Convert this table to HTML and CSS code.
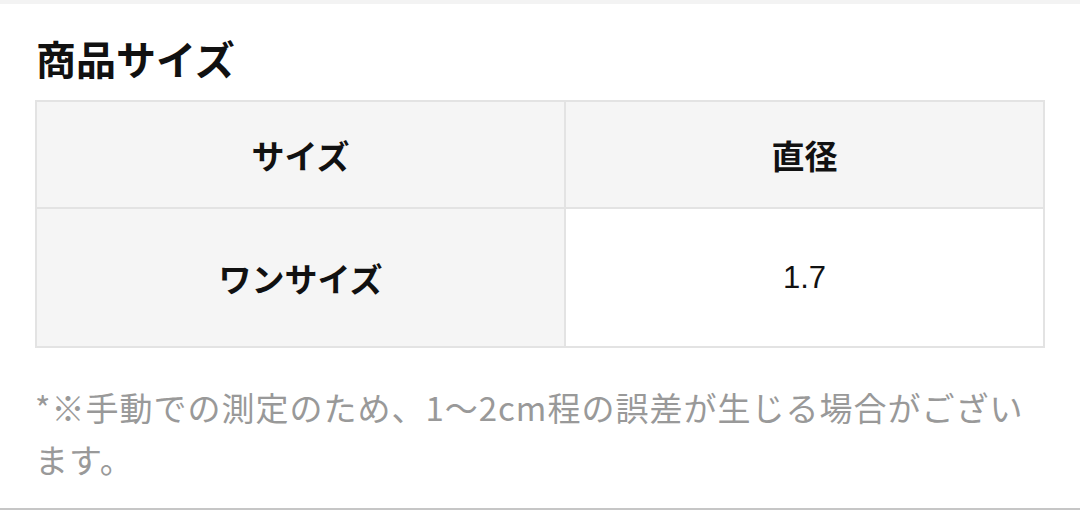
FILE: index.html
```html
<!DOCTYPE html>
<html lang="ja">
<head>
<meta charset="utf-8">
<link rel="stylesheet" href="styles.css">
</head>
<body>
<div class="top-band"></div>
<section class="size-section">
  <h2 class="title">商品サイズ</h2>
  <table class="size-table">
    <thead>
      <tr>
        <th class="col-size">サイズ</th>
        <th class="col-dia">直径</th>
      </tr>
    </thead>
    <tbody>
      <tr>
        <th class="row-head">ワンサイズ</th>
        <td class="value">1.7</td>
      </tr>
    </tbody>
  </table>
  <p class="note">*※手動での測定のため、1〜2cm程の誤差が生じる場合がございます。</p>
</section>
<div class="bottom-line"></div>
</body>
</html>
```

FILE: styles.css
```css
html, body {
  margin: 0;
  padding: 0;
  background: #ffffff;
}
body {
  width: 1080px;
  height: 510px;
  overflow: hidden;
  display: flex;
  flex-direction: column;
  font-family: "Liberation Sans", "Noto Sans CJK JP", sans-serif;
}
.top-band {
  height: 4px;
  background: #f3f3f3;
}
.size-section {
  flex: 1;
  padding: 0 35px;
}
.title {
  margin: 34px 0 0 1px;
  font-size: 40px;
  line-height: 40px;
  height: 40px;
  font-weight: 700;
  color: #111111;
  font-family: "Noto Sans CJK JP", sans-serif;
}
.size-table {
  margin-top: 22px;
  width: 1010px;
  border-collapse: collapse;
  table-layout: fixed;
  border: 2px solid #e3e3e3;
}
.size-table th,
.size-table td {
  border: 2px solid #e3e3e3;
  text-align: center;
  padding: 0;
  color: #111111;
}
.col-size { width: 527px; }
thead th {
  height: 105px;
  background: #f5f5f5;
  font-size: 33px;
  font-weight: 700;
  font-family: "Noto Sans CJK JP", sans-serif;
  padding-bottom: 3px;
}
tbody th.row-head {
  height: 137px;
  background: #f5f5f5;
  font-size: 33px;
  font-weight: 700;
  font-family: "Noto Sans CJK JP", sans-serif;
}
tbody td.value {
  background: #ffffff;
  font-size: 31px;
  font-weight: 400;
  font-family: "Liberation Sans", sans-serif;
}
.note {
  margin: 33px 0 0 0;
  width: 1010px;
  font-size: 33px;
  line-height: 52px;
  letter-spacing: 1px;
  color: #999999;
  font-family: "Noto Sans CJK JP", sans-serif;
}
.bottom-line {
  height: 2px;
  background: #c6c6c6;
}
```
